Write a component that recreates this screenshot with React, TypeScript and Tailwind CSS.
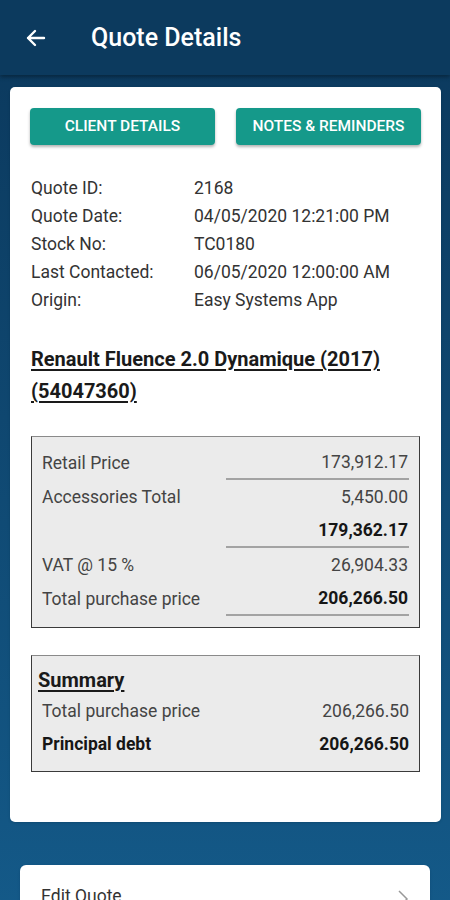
import React from 'react';

const INFO = [
  { label: 'Quote ID:', value: '2168' },
  { label: 'Quote Date:', value: '04/05/2020 12:21:00 PM' },
  { label: 'Stock No:', value: 'TC0180' },
  { label: 'Last Contacted:', value: '06/05/2020 12:00:00 AM' },
  { label: 'Origin:', value: 'Easy Systems App' },
];

const PRICES = [
  { label: 'Retail Price', value: '173,912.17', line: true },
  { label: 'Accessories Total', value: '5,450.00' },
  { label: '', value: '179,362.17', bold: true, line: true },
  { label: 'VAT @ 15 %', value: '26,904.33' },
  { label: 'Total purchase price', value: '206,266.50', bold: true, line: true },
];

const PriceRow = ({ label, value, bold, line }: { label: string; value: string; bold?: boolean; line?: boolean }) => (
  <div className="flex h-[34px] items-center justify-between">
    <span className="text-[17.5px] text-[#444]">{label}</span>
    <div
      className={`flex h-full w-[183px] items-center justify-end pr-px ${line ? 'border-b-2 border-[#a3a3a3]' : ''}`}
    >
      <span className={`text-[17.5px] ${bold ? 'font-bold text-[#161616]' : 'text-[#444]'}`}>{value}</span>
    </div>
  </div>
);

const App: React.FC = () => {
  return (
    <div className="min-h-[900px] w-[450px] overflow-hidden bg-gradient-to-b from-[#0b385c] to-[#145a89] font-['Roboto',sans-serif]">
      <header className="flex h-[75px] items-center bg-[#0c3a5e] shadow-[0_2px_4px_rgba(0,0,0,0.35)]">
        <svg className="ml-[24px] mt-px" width="24" height="24" viewBox="0 0 24 24" fill="none">
          <path d="M20 12H4M11 5l-7 7 7 7" stroke="white" strokeWidth="2.4" strokeLinecap="round" strokeLinejoin="round" />
        </svg>
        <h1 className="ml-[43px] mt-px text-[25px] font-medium text-white">Quote Details</h1>
      </header>

      <div className="ml-[10px] mt-[12px] w-[431px] rounded-[5px] bg-white px-[20px] pb-[50px] pt-[21px] shadow">
        <div className="flex gap-[21px]">
          <button className="h-[37px] w-[185px] rounded-[4px] bg-[#15998a] text-[15.5px] font-medium uppercase text-white shadow-[0_2px_3px_rgba(0,0,0,0.3)]">
            Client Details
          </button>
          <button className="h-[37px] w-[185px] rounded-[4px] bg-[#15998a] text-[15.5px] font-medium uppercase text-white shadow-[0_2px_3px_rgba(0,0,0,0.3)]">
            Notes &amp; Reminders
          </button>
        </div>

        <div className="mt-[29px] pl-px">
          {INFO.map(({ label, value }) => (
            <div key={label} className="flex h-[28px] items-center text-[17.5px] text-[#333]">
              <span className="w-[163px]">{label}</span>
              <span>{value}</span>
            </div>
          ))}
        </div>

        <h2 className="mt-[29px] pl-px text-[20px] font-bold leading-[32px] text-[#1a1a1a] underline underline-offset-[3px]">
          Renault Fluence 2.0 Dynamique (2017) (54047360)
        </h2>

        <div className="mx-px mt-[29px] border-[1.5px] border-[#3a3a3a] border-t-[#8a8a8a] bg-[#ebebeb] pb-[11px] pl-[10px] pr-[10px] pt-[9px]">
          {PRICES.map((p, i) => (
            <PriceRow key={i} {...p} />
          ))}
        </div>

        <div className="mx-px mt-[27px] border-[1.5px] border-[#3a3a3a] border-t-[#8a8a8a] bg-[#ebebeb] pb-[10px] pl-[6px] pr-[10px] pt-[9px]">
          <div className="h-[30px] text-[20px] font-bold leading-[30px] text-[#1a1a1a] underline underline-offset-[3px]">
            Summary
          </div>
          <div className="flex h-[33px] items-center justify-between pl-[4px]">
            <span className="text-[17.5px] text-[#444]">Total purchase price</span>
            <span className="text-[17.5px] text-[#444]">206,266.50</span>
          </div>
          <div className="flex h-[33px] items-center justify-between pl-[4px]">
            <span className="text-[17.5px] font-bold text-[#161616]">Principal debt</span>
            <span className="text-[17.5px] font-bold text-[#161616]">206,266.50</span>
          </div>
        </div>
      </div>

      <div className="ml-[20px] mt-[43px] flex h-[60px] w-[410px] items-start justify-between rounded-[6px] bg-white px-[21px] pt-[18px] shadow">
        <span className="text-[17.5px] text-[#333]">Edit Quote</span>
        <svg width="12" height="20" viewBox="0 0 12 20" fill="none" className="mt-[6px]">
          <path d="M2 2l8 8-8 8" stroke="#999" strokeWidth="1.5" />
        </svg>
      </div>
    </div>
  );
};

export default App;
